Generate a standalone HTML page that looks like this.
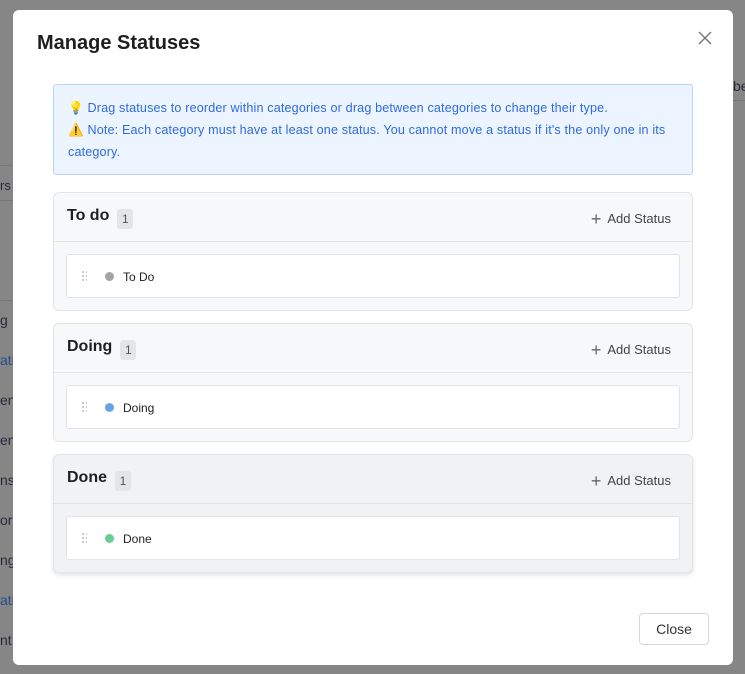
<!DOCTYPE html>
<html><head><style>
*{box-sizing:border-box;margin:0;padding:0}
body{width:745px;height:674px;background:#868686;font-family:"Liberation Sans",sans-serif;position:relative;overflow:hidden}
.bgt{position:absolute;color:#2a2a3a;font-size:14px}
.bl{position:absolute;height:1px;background:#777;left:0;width:13px}
.modal{position:absolute;left:13px;top:10px;width:720px;height:655px;background:#fff;border-radius:6px}
h1{position:absolute;left:24px;top:22px;font-size:20px;font-weight:600;color:#1f1f1f}
.x{position:absolute;left:683px;top:19px;width:18px;height:18px}
.info{position:absolute;left:40px;top:74px;width:640px;height:91px;background:#ebf4ff;border:1px solid #b9d6f9;border-radius:3px;color:#2f6bde;font-size:12.6px;padding:12px 0 0 14px;line-height:22px;letter-spacing:0.15px}
.cat{position:absolute;left:40px;width:640px;height:119px;background:#f7f8fa;border:1px solid #e2e4e8;border-radius:6px}
.cat.done{background:#f1f2f4;box-shadow:0 2px 4px rgba(0,0,0,.12)}
.hd{height:49px;border-bottom:1px solid #e2e4e8;position:relative}
.ttl{position:absolute;left:13px;top:14px;font-size:16px;font-weight:600;color:#1f1f1f}
.cnt{display:inline-block;margin-left:8px;background:#e4e5e8;color:#555;font-size:12px;font-weight:400;height:20px;line-height:20px;text-align:center;border-radius:3px;vertical-align:-3px;width:16px}
.add{position:absolute;right:21px;top:16px;font-size:13px;color:#444}
.add span{font-size:18px;color:#666;margin-right:6px;vertical-align:-2px}
.item{position:absolute;left:12px;top:61px;width:614px;height:44px;background:#fff;border:1px solid #e1e3e6;border-radius:3px}
.grip{position:absolute;left:14px;top:15px;width:6px;height:12px;background-image:radial-gradient(circle,#bbb 0.8px,transparent 1px);background-size:4px 4px}
.dot{position:absolute;left:38px;top:17px;width:9px;height:9px;border-radius:50%}
.lbl{position:absolute;left:56px;top:15px;font-size:12px;color:#222}
.btn{position:absolute;left:626px;top:603px;width:70px;height:32px;border:1px solid #d4d6da;border-radius:4px;font-size:14px;color:#333;text-align:center;line-height:30px}
</style></head><body>
<div class="bl" style="top:165px"></div><div class="bl" style="top:200px"></div><div class="bl" style="top:300px"></div>
<div class="bgt" style="left:0;top:178px;font-size:13px">rs</div>
<div class="bgt" style="left:0;top:312px">g</div>
<div class="bgt" style="left:0;top:352px;color:#2d4a8a">ati</div>
<div class="bgt" style="left:0;top:392px">ent</div>
<div class="bgt" style="left:0;top:432px">en</div>
<div class="bgt" style="left:0;top:472px">ns</div>
<div class="bgt" style="left:0;top:512px">or</div>
<div class="bgt" style="left:0;top:552px">ng</div>
<div class="bgt" style="left:0;top:592px;color:#2d4a8a">ati</div>
<div class="bgt" style="left:0;top:632px">nt</div>
<div class="bgt" style="left:733px;top:78px">be</div>
<div style="position:absolute;left:733px;top:100px;width:12px;height:1px;background:#777"></div>
<div class="modal">
<h1>Manage Statuses</h1>
<svg class="x" viewBox="0 0 18 18"><path d="M3 3L15 15M15 3L3 15" stroke="#777" stroke-width="1.4"/></svg>
<div class="info">💡 Drag statuses to reorder within categories or drag between categories to change their type.<br>⚠️ Note: Each category must have at least one status. You cannot move a status if it's the only one in its<br>category.</div>
<div class="cat" style="top:182px"><div class="hd"><div class="ttl">To do<span class="cnt">1</span></div><div class="add"><span>+</span>Add Status</div></div><div class="item"><div class="grip"></div><div class="dot" style="background:#a3a3a3"></div><div class="lbl">To Do</div></div></div>
<div class="cat" style="top:313px"><div class="hd"><div class="ttl">Doing<span class="cnt">1</span></div><div class="add"><span>+</span>Add Status</div></div><div class="item"><div class="grip"></div><div class="dot" style="background:#6aa2ea"></div><div class="lbl">Doing</div></div></div>
<div class="cat done" style="top:444px"><div class="hd"><div class="ttl">Done<span class="cnt">1</span></div><div class="add"><span>+</span>Add Status</div></div><div class="item"><div class="grip"></div><div class="dot" style="background:#6ccb94"></div><div class="lbl">Done</div></div></div>
<div class="btn">Close</div>
</div>
</body></html>
